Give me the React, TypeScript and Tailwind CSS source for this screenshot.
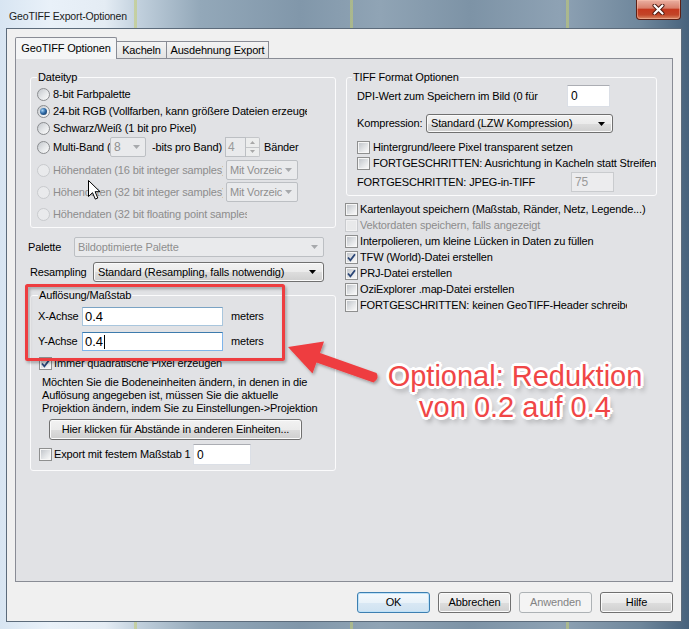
import React from 'react';

function Radio({ checked = false, disabled = false }: { checked?: boolean; disabled?: boolean }) {
  return (
    <span
      className={
        disabled
          ? 'flex h-[13px] w-[13px] shrink-0 items-center justify-center rounded-full border border-[#c8cacd] bg-[#e9eaec]'
          : 'flex h-[13px] w-[13px] shrink-0 items-center justify-center rounded-full border border-[#8a8c8f] bg-[linear-gradient(135deg,#c3c7cc_0%,#e6e8ea_55%,#fbfbfb_100%)]'
      }
    >
      {checked && (
        <span className="h-[7px] w-[7px] rounded-full bg-[radial-gradient(circle_at_35%_35%,#a7d4f6_0%,#2f6aa6_45%,#0f2b4d_100%)]" />
      )}
    </span>
  );
}

function Check({ checked = false, disabled = false }: { checked?: boolean; disabled?: boolean }) {
  return (
    <span
      className={
        disabled
          ? 'flex h-[13px] w-[13px] shrink-0 items-center justify-center border border-[#c9cbce] bg-[#f1f1f2]'
          : 'flex h-[13px] w-[13px] shrink-0 items-center justify-center border border-[#8e8f8f] bg-[#f6f6f6]'
      }
    >
      <span
        className={
          disabled
            ? 'flex h-[9px] w-[9px] items-center justify-center bg-[#e8e9ea]'
            : 'flex h-[9px] w-[9px] items-center justify-center bg-[linear-gradient(135deg,#c2c6cb_0%,#e4e6e8_60%,#f8f8f8_100%)]'
        }
      >
        {checked && (
          <svg width="11" height="11" viewBox="0 0 11 11" className="-m-[1px] shrink-0">
            <path d="M2 5.5 L4.4 8.3 L9 2.3" fill="none" stroke="#2b4676" strokeWidth="1.8" />
          </svg>
        )}
      </span>
    </span>
  );
}

function Select({ value, className, disabled = false }: { value: string; className: string; disabled?: boolean }) {
  if (disabled) {
    return (
      <div
        className={`flex items-center rounded-[2px] border border-[#bcbfc3] bg-[#e9eaec] pl-[3px] pr-[5px] text-[#8f8f8f] ${className}`}
      >
        <span className="flex-1 overflow-hidden whitespace-nowrap">{value}</span>
        <svg width="7" height="4" viewBox="0 0 7 4" className="ml-[3px] shrink-0">
          <path d="M0 0h7L3.5 4z" fill="#a7a9ac" />
        </svg>
      </div>
    );
  }
  return (
    <div
      className={`flex items-center rounded-[3px] border border-[#707070] bg-[linear-gradient(#f2f2f2_0%,#ebebeb_50%,#dddddd_51%,#cfcfcf_100%)] pl-[4px] pr-[7px] shadow-[inset_0_0_0_1px_#fafafa] ${className}`}
    >
      <span className="flex-1 overflow-hidden whitespace-nowrap">{value}</span>
      <svg width="7" height="4" viewBox="0 0 7 4" className="shrink-0">
        <path d="M0 0h7L3.5 4z" fill="#000" />
      </svg>
    </div>
  );
}

function Btn({ children, variant = 'normal' }: { children: React.ReactNode; variant?: 'normal' | 'default' | 'disabled' }) {
  if (variant === 'disabled') {
    return (
      <div className="flex h-[21px] w-[73px] items-center justify-center rounded-[3px] border border-[#adb2b5] bg-[#f4f4f4] text-[#838383]">
        {children}
      </div>
    );
  }
  if (variant === 'default') {
    return (
      <div className="flex h-[21px] w-[73px] items-center justify-center rounded-[3px] border border-[#3c7fb1] bg-[linear-gradient(#f4f9fd_0%,#e9f2f9_50%,#d9e8f4_51%,#cfe2f1_100%)] shadow-[inset_0_0_0_1px_#bfe2f8]">
        {children}
      </div>
    );
  }
  return (
    <div className="flex h-[21px] w-[73px] items-center justify-center rounded-[3px] border border-[#707070] bg-[linear-gradient(#f2f2f2_0%,#ebebeb_50%,#dddddd_51%,#cfcfcf_100%)] shadow-[inset_0_0_0_1px_#fbfbfb]">
      {children}
    </div>
  );
}

export default function App() {
  return (
    <div className="relative h-[629px] w-[689px] overflow-hidden bg-[linear-gradient(90deg,transparent_134px,rgba(196,204,112,0.55)_134px,rgba(196,204,112,0.55)_137px,transparent_137px,transparent_350px,rgba(196,204,112,0.55)_350px,rgba(196,204,112,0.55)_353px,transparent_353px,transparent_566px,rgba(196,204,112,0.55)_566px,rgba(196,204,112,0.55)_569px,transparent_569px),linear-gradient(90deg,#d8e5f2_0px,#e9f1f9_50px,#e4ecf4_105px,#c0cfdc_140px,#93a8b9_200px,#8197aa_300px,#90a4b5_380px,#7d93a6_470px,#8ea2b4_560px,#6f879c_640px,#47627c_689px)] font-['Liberation_Sans',Arial,sans-serif] text-[11px] tracking-[-0.15px] text-black">
      {/* title bar */}
      <div className="flex h-[28px] items-start justify-between">
        <span className="pl-[9px] pt-[9px] text-[10.5px] leading-[14px] text-[#1b1b1b]">GeoTIFF Export-Optionen</span>
        <div className="mr-[8px] flex h-[20px] w-[45px] items-center justify-center rounded-b-[4px] border border-t-0 border-[#5d2015] bg-[linear-gradient(#eab0a2_0%,#d9806c_42%,#c5391f_50%,#c24528_78%,#d98a66_100%)] shadow-[inset_0_0_0_1px_rgba(255,200,180,0.45)]">
          <svg width="13" height="11" viewBox="0 0 13 11">
            <path d="M2.5 1.5 L10.5 9.5 M10.5 1.5 L2.5 9.5" stroke="#4a160d" strokeWidth="4" strokeLinecap="round" />
            <path d="M2.5 1.5 L10.5 9.5 M10.5 1.5 L2.5 9.5" stroke="#fff" strokeWidth="2.2" strokeLinecap="round" />
          </svg>
        </div>
      </div>

      {/* client area */}
      <div className="ml-[6px] mr-[7px] flex h-[594px] flex-col border border-[#5c6b7b] bg-[#f0f0f0] px-[8px] pt-[8px]">
        {/* tabs */}
        <div className="flex h-[21px] items-end">
          <div className="relative z-10 -mb-px flex h-[22px] w-[102px] items-center justify-center rounded-t-[2px] border border-b-0 border-[#898c95] bg-[#f4f5f6] pb-[1px]">
            GeoTIFF Optionen
          </div>
          <div className="flex h-[17px] w-[50px] items-center justify-center border border-b-0 border-l-0 border-[#898c95] bg-[linear-gradient(#f4f4f4,#e3e3e3)]">
            Kacheln
          </div>
          <div className="flex h-[17px] w-[102px] items-center justify-center border border-b-0 border-l-0 border-[#898c95] bg-[linear-gradient(#f4f4f4,#e3e3e3)]">
            Ausdehnung Export
          </div>
        </div>

        {/* tab page */}
        <div className="h-[524px] border border-[#898c95] bg-[#e1e2e5] pl-[14px] pt-[11px]">
          <div className="grid grid-cols-[306px_306px] items-start gap-x-[9px]">
            {/* left column */}
            <div className="flex flex-col">
              <fieldset className="h-[158px] rounded-[3px] border border-[#fbfbfc] pl-[6px]">
                <legend className="px-[1px] leading-[14px]">Dateityp</legend>
                <div className="mt-[2px] flex h-[17px] items-center gap-[3px] whitespace-nowrap">
                  <Radio />
                  <span>8-bit Farbpalette</span>
                </div>
                <div className="flex h-[17px] w-[270px] items-center gap-[3px] overflow-hidden whitespace-nowrap">
                  <Radio checked />
                  <span>24-bit RGB (Vollfarben, kann größere Dateien erzeugen)</span>
                </div>
                <div className="flex h-[17px] items-center gap-[3px] whitespace-nowrap">
                  <Radio />
                  <span>Schwarz/Weiß (1 bit pro Pixel)</span>
                </div>
                <div className="flex h-[20px] items-center whitespace-nowrap">
                  <div className="flex w-[73px] items-center gap-[3px]">
                    <Radio />
                    <span>Multi-Band (</span>
                  </div>
                  <Select disabled value="8" className="h-[20px] w-[36px] text-[12px]" />
                  <span className="ml-[6px] w-[73px]">-bits pro Band)</span>
                  <div className="flex h-[20px] w-[35px]">
                    <span className="flex-1 border border-[#bcbfc3] bg-[#e9eaec] pl-[2px] text-[12px] leading-[18px] text-[#9a9a9a]">4</span>
                    <div className="flex w-[14px] flex-col">
                      <div className="flex flex-1 items-center justify-center rounded-tr-[2px] border border-l-0 border-[#c4c6c9] bg-[#eceded]">
                        <svg width="5" height="3" viewBox="0 0 5 3">
                          <path d="M0 3h5L2.5 0z" fill="#a8a8a8" />
                        </svg>
                      </div>
                      <div className="flex flex-1 items-center justify-center rounded-br-[2px] border border-l-0 border-t-0 border-[#c4c6c9] bg-[#eceded]">
                        <svg width="5" height="3" viewBox="0 0 5 3">
                          <path d="M0 0h5L2.5 3z" fill="#a8a8a8" />
                        </svg>
                      </div>
                    </div>
                  </div>
                  <span className="ml-[4px]">Bänder</span>
                </div>
                <div className="mt-[2px] flex h-[22px] items-center">
                  <div className="flex w-[186px] items-center gap-[3px] overflow-hidden whitespace-nowrap text-[#8d8d8d]">
                    <Radio disabled />
                    <span>Höhendaten (16 bit integer samples)</span>
                  </div>
                  <Select disabled value="Mit Vorzeichen" className="ml-[3px] h-[20px] w-[72px]" />
                </div>
                <div className="flex h-[22px] items-center">
                  <div className="flex w-[186px] items-center gap-[3px] overflow-hidden whitespace-nowrap text-[#8d8d8d]">
                    <Radio disabled />
                    <span>Höhendaten (32 bit integer samples)</span>
                  </div>
                  <Select disabled value="Mit Vorzeichen" className="ml-[3px] h-[20px] w-[72px]" />
                </div>
                <div className="flex h-[22px] w-[210px] items-center gap-[3px] overflow-hidden whitespace-nowrap text-[#8d8d8d]">
                  <Radio disabled />
                  <span>Höhendaten (32 bit floating point samples)</span>
                </div>
              </fieldset>

              <div className="-ml-[2px] mt-[9px] flex h-[20px] items-center">
                <span className="w-[46px]">Palette</span>
                <Select disabled value="Bildoptimierte Palette" className="h-[20px] w-[250px]" />
              </div>
              <div className="mt-[5px] flex h-[20px] items-center">
                <span className="w-[63px]">Resampling</span>
                <Select value="Standard (Resampling, falls notwendig)" className="h-[20px] w-[231px]" />
              </div>

              <fieldset className="mt-[6px] h-[183px] rounded-[3px] border border-[#fbfbfc] pl-[7px]">
                <legend className="px-[1px] leading-[14px]">Auflösung/Maßstab</legend>
                <div className="mt-[5px] flex h-[19px] items-center">
                  <span className="w-[44px]">X-Achse</span>
                  <div className="flex h-[19px] w-[141px] items-center border border-[#a9c6dd] border-t-[#7aa3c4] bg-white pl-[2px] text-[13px] tracking-normal">0.4</div>
                  <span className="ml-[8px]">meters</span>
                </div>
                <div className="mt-[6px] flex h-[19px] items-center">
                  <span className="w-[44px]">Y-Achse</span>
                  <div className="flex h-[19px] w-[141px] items-center border border-[#7eb4ea] border-t-[#3d7bad] bg-white pl-[2px] text-[13px] tracking-normal">
                    0.4
                    <span className="ml-px h-[14px] w-px bg-black" />
                  </div>
                  <span className="ml-[8px]">meters</span>
                </div>
                <div className="ml-px mt-[5px] flex h-[14px] items-center gap-[2px] whitespace-nowrap">
                  <Check checked />
                  <span>Immer quadratische Pixel erzeugen</span>
                </div>
                <p className="mt-[6px] pl-[4px] leading-[13px]">
                  Möchten Sie die Bodeneinheiten ändern, in denen in die
                  <br />
                  Auflösung angegeben ist, müssen Sie die aktuelle
                  <br />
                  Projektion ändern, indem Sie zu Einstellungen-&gt;Projektion
                </p>
                <div className="ml-[11px] mt-[4px] flex h-[21px] w-[253px] items-center justify-center rounded-[3px] border border-[#707070] bg-[linear-gradient(#f2f2f2_0%,#ebebeb_50%,#dddddd_51%,#cfcfcf_100%)] shadow-[inset_0_0_0_1px_#fbfbfb]">
                  Hier klicken für Abstände in anderen Einheiten...
                </div>
                <div className="ml-px mt-[4px] flex h-[21px] items-center whitespace-nowrap">
                  <Check />
                  <span className="ml-[2px] w-[139px]">Export mit festem Maßstab 1</span>
                  <div className="flex h-[21px] w-[58px] items-center border border-[#dbdfe6] border-t-[#abadb3] bg-white pl-[3px] text-[12px]">0</div>
                </div>
              </fieldset>
            </div>

            {/* right column */}
            <div className="flex flex-col">
              <fieldset className="ml-px h-[126px] w-[305px] rounded-[3px] border border-[#fbfbfc] pl-[5px]">
                <legend className="px-[1px] leading-[14px]">TIFF Format Optionen</legend>
                <div className="pl-[5px]">
                  <div className="mt-px flex h-[22px] items-center whitespace-nowrap">
                    <span className="w-[210px]">DPI-Wert zum Speichern im Bild (0 für</span>
                    <div className="flex h-[22px] w-[43px] items-start border border-[#dbdfe6] border-t-[#abadb3] bg-white pl-[3px] pt-px text-[12px]">0</div>
                  </div>
                  <div className="mt-[7px] flex h-[19px] items-center">
                    <span className="w-[69px]">Kompression:</span>
                    <Select value="Standard (LZW Kompression)" className="h-[19px] w-[187px]" />
                  </div>
                  <div className="mt-[6px] flex h-[16px] items-center gap-[3px] whitespace-nowrap">
                    <Check />
                    <span>Hintergrund/leere Pixel transparent setzen</span>
                  </div>
                  <div className="flex h-[16px] items-center gap-[3px] whitespace-nowrap">
                    <Check />
                    <span>FORTGESCHRITTEN: Ausrichtung in Kacheln statt Streifen</span>
                  </div>
                  <div className="mt-px flex h-[20px] items-center whitespace-nowrap">
                    <span className="w-[214px]">FORTGESCHRITTEN: JPEG-in-TIFF</span>
                    <div className="flex h-[20px] w-[43px] items-center border border-[#c9cbce] bg-[#ececee] pl-[3px] text-[12px] text-[#9a9a9a]">75</div>
                  </div>
                </div>
              </fieldset>

              <div className="mt-[5px] flex flex-col whitespace-nowrap">
                <div className="flex h-[16px] items-center gap-[2px]">
                  <Check />
                  <span>Kartenlayout speichern (Maßstab, Ränder, Netz, Legende...)</span>
                </div>
                <div className="flex h-[16px] items-center gap-[2px] text-[#8d8d8d]">
                  <Check disabled />
                  <span>Vektordaten speichern, falls angezeigt</span>
                </div>
                <div className="flex h-[16px] items-center gap-[2px]">
                  <Check />
                  <span>Interpolieren, um kleine Lücken in Daten zu füllen</span>
                </div>
                <div className="flex h-[16px] items-center gap-[2px]">
                  <Check checked />
                  <span>TFW (World)-Datei erstellen</span>
                </div>
                <div className="flex h-[16px] items-center gap-[2px]">
                  <Check checked />
                  <span>PRJ-Datei erstellen</span>
                </div>
                <div className="flex h-[16px] items-center gap-[2px]">
                  <Check />
                  <span>OziExplorer .map-Datei erstellen</span>
                </div>
                <div className="flex h-[16px] w-[282px] items-center gap-[2px] overflow-hidden">
                  <Check />
                  <span>FORTGESCHRITTEN: keinen GeoTIFF-Header schreiben</span>
                </div>
              </div>
            </div>
          </div>
        </div>

        {/* dialog buttons */}
        <div className="mt-[10px] flex h-[21px] justify-end gap-[8px]">
          <Btn variant="default">OK</Btn>
          <Btn>Abbrechen</Btn>
          <Btn variant="disabled">Anwenden</Btn>
          <Btn>Hilfe</Btn>
        </div>
      </div>

      {/* annotations drawn over the dialog */}
      <svg className="pointer-events-none absolute left-0 top-0" width="689" height="629" viewBox="0 0 689 629">
        <defs>
          <filter id="sh" x="-20%" y="-20%" width="140%" height="140%">
            <feDropShadow dx="1.5" dy="2" stdDeviation="1.5" floodColor="#000" floodOpacity="0.3" />
          </filter>
        </defs>
        <rect x="26.5" y="285.5" width="257" height="74" rx="1" fill="none" stroke="#ee3d40" strokeWidth="3" filter="url(#sh)" />
        <path
          d="M288 347 L324 341.5 L320 353 L376.5 373 Q380 378 373.5 382.5 L316.5 362.5 L312.5 373.5 Z"
          fill="#ee3d40"
          filter="url(#sh)"
        />
        <path
          transform="translate(88.5 180.5)"
          d="M0 0 L0 16 L4 12.2 L6.8 18.6 L9.3 17.5 L6.6 11.2 L11.5 11.2 Z"
          fill="#fff"
          stroke="#000"
          strokeWidth="1"
          strokeLinejoin="round"
        />
      </svg>
      <div className="pointer-events-none absolute left-[375px] top-[361px] w-[280px] text-center text-[29px] leading-[31px] tracking-normal text-[#f04646] [text-shadow:3px_0_0_#fff,-3px_0_0_#fff,0_3px_0_#fff,0_-3px_0_#fff,2px_2px_0_#fff,-2px_2px_0_#fff,2px_-2px_0_#fff,-2px_-2px_0_#fff,3px_5px_5px_rgba(0,0,0,0.35)]">
        Optional: Reduktion
        <br />
        von 0.2 auf 0.4
      </div>
    </div>
  );
}
